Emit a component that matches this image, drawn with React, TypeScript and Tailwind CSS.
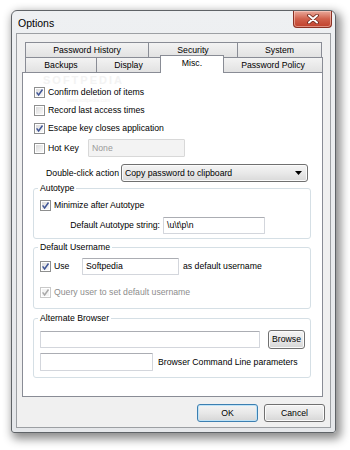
import React from "react";

function Check({ checked = false, disabled = false }: { checked?: boolean; disabled?: boolean }) {
  return (
    <span
      className={`flex h-[11px] w-[11px] shrink-0 items-center justify-center border shadow-[inset_0_0_0_1px_#ffffff] ${
        disabled
          ? "border-[#c9c9c9] bg-[#f4f4f4]"
          : "border-[#8e8f8f] bg-gradient-to-br from-[#d6d6d6] via-[#ebebeb] to-[#fbfbfb]"
      }`}
    >
      {checked && (
        <svg width="9" height="9" viewBox="0 0 9 9">
          <path
            d="M1.6 4.4 L3.6 6.9 L7.5 1.5"
            fill="none"
            stroke={disabled ? "#a8a8a8" : "#3f5596"}
            strokeWidth="1.5"
          />
        </svg>
      )}
    </span>
  );
}

function TextBox({ w, h, text, disabled = false }: { w: string; h: string; text?: string; disabled?: boolean }) {
  return (
    <div
      className={`${w} ${h} flex items-center overflow-hidden rounded-[1px] border pl-[3px] ${
        disabled
          ? "border-[#d8d8d8] bg-[#f3f3f3] text-[#9a9a9a]"
          : "border-[#d3d6dc] border-t-[#abadb3] bg-white text-black"
      }`}
    >
      {text}
    </div>
  );
}

function Btn({ label, w, focus = false }: { label: string; w: string; focus?: boolean }) {
  return (
    <div
      className={`${w} flex h-full items-center justify-center rounded-[3px] border bg-gradient-to-b from-[#f4f4f4] via-[#e8e8e8] to-[#d6d6d6] ${
        focus ? "border-[#3c7fb1] shadow-[inset_0_0_0_1px_#bfe3f7]" : "border-[#707070] shadow-[inset_0_0_0_1px_#fbfbfb]"
      }`}
    >
      {label}
    </div>
  );
}

export default function App() {
  return (
    <div className="h-[450px] w-[350px] overflow-hidden bg-white pl-[11px] pt-[10px] font-['Liberation_Sans',Arial,sans-serif] text-[8.7px] leading-none text-black">
      {/* window */}
      <div className="flex h-[423px] w-[325px] flex-col rounded-t-[6px] rounded-b-[3px] border border-[#5f6367] bg-gradient-to-b from-[#eef0f2] to-[#e5e7ea] shadow-[3px_4px_10px_2px_rgba(0,0,0,0.45)]">
        {/* title bar */}
        <div className="flex h-[22px] items-start justify-between pl-[6px] pr-[3px]">
          <span className="mt-[6px] text-[10.5px] leading-[12px] text-black">Options</span>
          <div className="flex h-[17px] w-[39px] items-center justify-center rounded-b-[4px] border border-t-0 border-[#8a3023] bg-gradient-to-b from-[#e9a99b] via-[#d0604b] to-[#c0402b] shadow-[inset_0_0_0_1px_rgba(255,220,210,0.5)]">
            <svg width="12" height="10" viewBox="0 0 12 10">
              <path d="M2 1.5 L10 8.5 M10 1.5 L2 8.5" stroke="#6b2418" strokeWidth="3.6" strokeLinecap="round" />
              <path d="M2 1.5 L10 8.5 M10 1.5 L2 8.5" stroke="#ffffff" strokeWidth="2" strokeLinecap="round" />
            </svg>
          </div>
        </div>
        {/* client area */}
        <div className="mx-[4px] flex flex-col border border-[#9c9fa3] bg-[#f0f0f0] px-[5px] pb-[5px] pt-[8px]">
          {/* back tab row */}
          <div className="ml-[3px] flex h-[15px]">
            <div className="flex w-[124px] items-center justify-center border border-b-0 border-[#898c95] bg-gradient-to-b from-[#f3f3f3] to-[#e2e2e2]">
              Password History
            </div>
            <div className="-ml-px flex w-[90px] items-center justify-center border border-b-0 border-[#898c95] bg-gradient-to-b from-[#f3f3f3] to-[#e2e2e2]">
              Security
            </div>
            <div className="-ml-px flex w-[85px] items-center justify-center border border-b-0 border-[#898c95] bg-gradient-to-b from-[#f3f3f3] to-[#e2e2e2]">
              System
            </div>
          </div>
          {/* front tab row */}
          <div className="ml-[3px] flex h-[15px]">
            <div className="flex w-[72px] items-center justify-center border border-b-0 border-[#898c95] bg-gradient-to-b from-[#f3f3f3] to-[#e2e2e2]">
              Backups
            </div>
            <div className="-ml-px flex w-[65px] items-center justify-center border border-b-0 border-[#898c95] bg-gradient-to-b from-[#f3f3f3] to-[#e2e2e2]">
              Display
            </div>
            <div className="relative z-10 -ml-px -mt-[2px] flex h-[18px] w-[64px] items-start justify-center border border-b-0 border-[#898c95] bg-white pt-[3px]">
              Misc.
            </div>
            <div className="-ml-px flex w-[100px] items-center justify-center border border-b-0 border-[#898c95] bg-gradient-to-b from-[#f3f3f3] to-[#e2e2e2]">
              Password Policy
            </div>
          </div>
          {/* panel */}
          <div className="relative flex h-[325px] w-[301px] flex-col border border-[#898c95] bg-white">
            {/* watermark */}
            <div className="pointer-events-none absolute left-[20px] top-[2px] text-[11px] font-bold leading-none tracking-[2px] text-[#f3f3f3]">
              SOFTPEDIA
            </div>
            <div className="pointer-events-none absolute left-[44px] top-[25px] text-[5px] leading-none text-[#f2f2f2]">
              www.softpedia.com
            </div>

            <div className="relative mt-[10px] flex h-[18px] items-center gap-[3px] pl-[11px]">
              <Check checked />
              <span>Confirm deletion of items</span>
            </div>
            <div className="relative flex h-[18px] items-center gap-[3px] pl-[11px]">
              <Check />
              <span>Record last access times</span>
            </div>
            <div className="relative flex h-[18px] items-center gap-[3px] pl-[11px]">
              <Check checked />
              <span>Escape key closes application</span>
            </div>
            <div className="mt-[2px] flex h-[18px] items-center">
              <div className="flex w-[65px] items-center gap-[3px] pl-[11px]">
                <Check />
                <span>Hot Key</span>
              </div>
              <TextBox w="w-[97px]" h="h-[18px]" text="None" disabled />
            </div>
            <div className="mt-[7px] flex h-[18px] items-center">
              <span className="w-[98px] pr-[2px] text-right">Double-click action</span>
              <div className="flex h-[18px] w-[187px] items-center justify-between rounded-[3px] border border-[#707070] bg-gradient-to-b from-[#f4f4f4] via-[#e9e9e9] to-[#d9d9d9] pl-[3px] pr-[5px] shadow-[inset_0_0_0_1px_#fbfbfb]">
                <span>Copy password to clipboard</span>
                <svg width="7" height="4" viewBox="0 0 7 4">
                  <path d="M0 0 L7 0 L3.5 4 Z" fill="#000" />
                </svg>
              </div>
            </div>

            {/* Autotype */}
            <fieldset className="ml-[10px] mt-[1px] w-[278px] rounded-[3px] border border-[#d5dfe5] pb-[4px]">
              <legend className="ml-[4px] px-[2px] leading-[10px]">Autotype</legend>
              <div className="mt-[3px] flex h-[18px] items-center gap-[3px] pl-[6px]">
                <Check checked />
                <span>Minimize after Autotype</span>
              </div>
              <div className="mt-[3px] flex h-[17px] items-center">
                <span className="w-[126px] text-right">Default Autotype string:</span>
                <div className="ml-[3px]">
                  <TextBox w="w-[102px]" h="h-[17px]" text="\u\t\p\n" />
                </div>
              </div>
            </fieldset>

            {/* Default Username */}
            <fieldset className="ml-[10px] mt-[3px] w-[278px] rounded-[3px] border border-[#d5dfe5] pb-[7px]">
              <legend className="ml-[4px] px-[2px] leading-[10px]">Default Username</legend>
              <div className="mt-[6px] flex h-[17px] items-center">
                <div className="flex w-[48px] items-center gap-[3px] pl-[6px]">
                  <Check checked />
                  <span>Use</span>
                </div>
                <TextBox w="w-[97px]" h="h-[17px]" text="Softpedia" />
                <span className="ml-[4px]">as default username</span>
              </div>
              <div className="mt-[8px] flex h-[18px] items-center gap-[3px] pl-[6px] text-[#8d8d8d]">
                <Check checked disabled />
                <span>Query user to set default username</span>
              </div>
            </fieldset>

            {/* Alternate Browser */}
            <fieldset className="ml-[10px] mt-[4px] w-[278px] rounded-[3px] border border-[#d5dfe5] pb-[6px]">
              <legend className="ml-[4px] px-[2px] leading-[10px]">Alternate Browser</legend>
              <div className="mt-[7px] flex h-[19px] items-center pl-[6px]">
                <TextBox w="w-[220px]" h="h-[17px]" />
                <div className="ml-[8px] h-[19px]">
                  <Btn label="Browse" w="w-[37px]" />
                </div>
              </div>
              <div className="mt-[4px] flex h-[18px] items-center pl-[6px]">
                <TextBox w="w-[113px]" h="h-[18px]" />
                <span className="ml-[5px]">Browser Command Line parameters</span>
              </div>
            </fieldset>
          </div>
          {/* buttons */}
          <div className="mt-[7px] flex h-[18px] justify-end gap-[6px]">
            <Btn label="OK" w="w-[61px]" focus />
            <Btn label="Cancel" w="w-[61px]" />
          </div>
        </div>
      </div>
    </div>
  );
}
